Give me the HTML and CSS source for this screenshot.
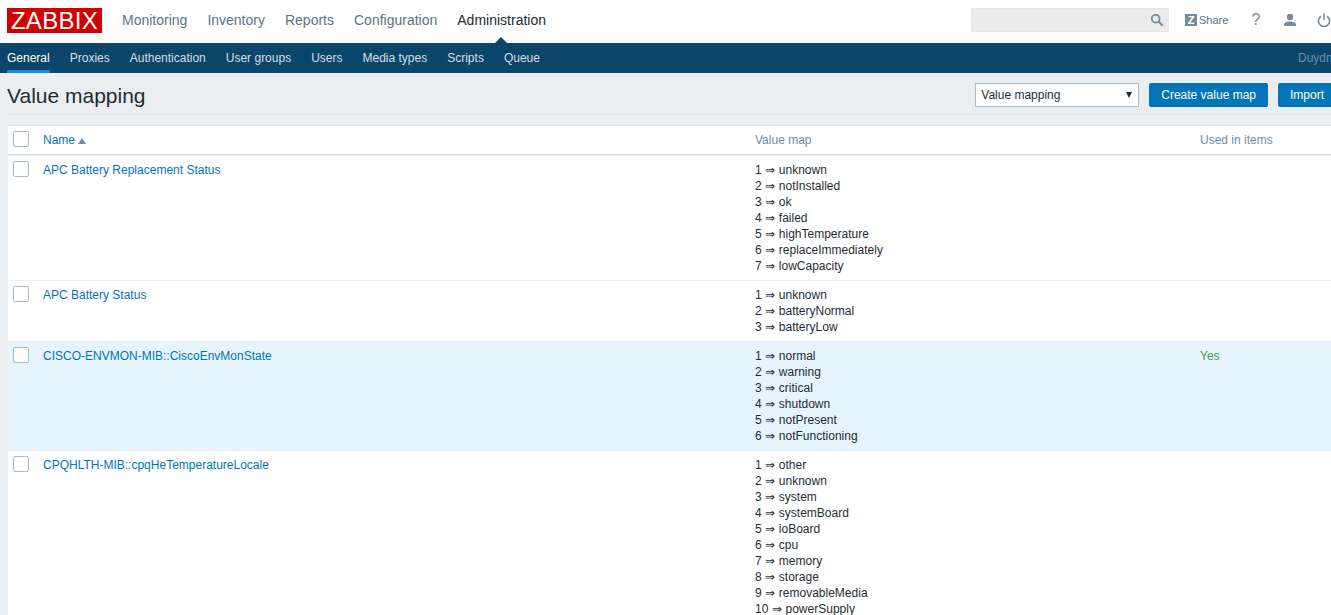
FILE: index.html
```html
<!DOCTYPE html>
<html lang="en">
<head>
  <meta charset="UTF-8">
  <meta name="viewport" content="width=device-width, initial-scale=1.0">
  <title>Configuration of value mapping</title>
  <link rel="stylesheet" href="styles.css">
</head>
<body>
  <div class="page">
    <!-- Top navigation -->
    <header class="topbar">
      <a class="logo">ZABBIX</a>
      <nav class="main-nav">
        <a>Monitoring</a>
        <a>Inventory</a>
        <a>Reports</a>
        <a>Configuration</a>
        <a class="selected">Administration</a>
      </nav>
      <div class="top-tools">
        <div class="search">
          <svg width="14" height="14" viewBox="0 0 16 16"><circle cx="6.5" cy="6.5" r="4.5" fill="none" stroke="#768d99" stroke-width="2"/><path d="M10 10l4.5 4.5" stroke="#768d99" stroke-width="2.4"/></svg>
        </div>
        <a class="share">
          <span class="share-z">Z</span>
          <span>Share</span>
        </a>
        <a class="tool tool-help">?</a>
        <a class="tool">
          <svg width="14" height="14" viewBox="0 0 14 14"><circle cx="7" cy="4" r="3.2" fill="#768d99"/><path d="M1 13v-1.5C1 9.5 4 8.5 7 8.5s6 1 6 3V13z" fill="#768d99"/></svg>
        </a>
        <a class="tool">
          <svg width="14" height="14" viewBox="0 0 14 14"><path d="M4 3.2a5.6 5.6 0 1 0 6 0" fill="none" stroke="#768d99" stroke-width="1.6"/><path d="M7 0.5v6.5" stroke="#768d99" stroke-width="1.6"/></svg>
        </a>
      </div>
    </header>

    <nav class="sub-nav">
      <a class="selected">General</a>
      <a>Proxies</a>
      <a>Authentication</a>
      <a>User groups</a>
      <a>Users</a>
      <a>Media types</a>
      <a>Scripts</a>
      <a>Queue</a>
      <span class="server-name">Duydm</span>
    </nav>

    <!-- Title and controls -->
    <div class="page-head">
      <h1>Value mapping</h1>
      <div class="controls">
        <div class="select">Value mapping<span class="select-arrow"></span></div>
        <button>Create value map</button>
        <button>Import</button>
      </div>
    </div>

    <table class="list">
      <colgroup>
        <col class="col-check">
        <col class="col-name">
        <col class="col-map">
        <col>
      </colgroup>
      <thead>
        <tr>
          <th><span class="checkbox"></span></th>
          <th><a>Name</a><span class="sort-up"></span></th>
          <th>Value map</th>
          <th>Used in items</th>
        </tr>
      </thead>
      <tbody>
        <tr>
          <td><span class="checkbox"></span></td>
          <td><a>APC Battery Replacement Status</a></td>
          <td class="map">
            <div>1 ⇒ unknown</div>
            <div>2 ⇒ notInstalled</div>
            <div>3 ⇒ ok</div>
            <div>4 ⇒ failed</div>
            <div>5 ⇒ highTemperature</div>
            <div>6 ⇒ replaceImmediately</div>
            <div>7 ⇒ lowCapacity</div>
          </td>
          <td></td>
        </tr>
        <tr>
          <td><span class="checkbox"></span></td>
          <td><a>APC Battery Status</a></td>
          <td class="map">
            <div>1 ⇒ unknown</div>
            <div>2 ⇒ batteryNormal</div>
            <div>3 ⇒ batteryLow</div>
          </td>
          <td></td>
        </tr>
        <tr class="hover">
          <td><span class="checkbox"></span></td>
          <td><a>CISCO-ENVMON-MIB::CiscoEnvMonState</a></td>
          <td class="map">
            <div>1 ⇒ normal</div>
            <div>2 ⇒ warning</div>
            <div>3 ⇒ critical</div>
            <div>4 ⇒ shutdown</div>
            <div>5 ⇒ notPresent</div>
            <div>6 ⇒ notFunctioning</div>
          </td>
          <td class="used">Yes</td>
        </tr>
        <tr>
          <td><span class="checkbox"></span></td>
          <td><a>CPQHLTH-MIB::cpqHeTemperatureLocale</a></td>
          <td class="map">
            <div>1 ⇒ other</div>
            <div>2 ⇒ unknown</div>
            <div>3 ⇒ system</div>
            <div>4 ⇒ systemBoard</div>
            <div>5 ⇒ ioBoard</div>
            <div>6 ⇒ cpu</div>
            <div>7 ⇒ memory</div>
            <div>8 ⇒ storage</div>
            <div>9 ⇒ removableMedia</div>
            <div>10 ⇒ powerSupply</div>
          </td>
          <td></td>
        </tr>
      </tbody>
    </table>
  </div>
</body>
</html>
```

FILE: styles.css
```css
html, body {
  margin: 0;
  padding: 0;
  height: 100%;
  overflow: hidden;
}
body {
  font-family: "Liberation Sans", Arial, sans-serif;
  font-size: 12px;
  line-height: 16px;
  color: #1f2c33;
  background: #ebeef0;
}
.page {
  width: 1346px;
}

/* top bar */
.topbar {
  display: flex;
  align-items: center;
  height: 43px;
  padding-left: 7px;
  background: #fff;
}
.logo {
  width: 95px;
  height: 25px;
  margin-top: -3px;
  background: #d40000;
  color: #fff;
  font-size: 24px;
  line-height: 26px;
  letter-spacing: 0.3px;
  text-align: center;
}
.main-nav {
  display: flex;
  gap: 20px;
  margin-left: 20px;
  margin-top: -3px;
  font-size: 14px;
  color: #5e7380;
}
.main-nav .selected {
  position: relative;
  color: #1f2c33;
}
.main-nav .selected::after {
  content: "";
  position: absolute;
  left: 37px;
  top: 25px;
  border: 7px solid transparent;
  border-top: 0;
  border-bottom-color: #0a466a;
}
.top-tools {
  display: flex;
  align-items: center;
  margin-left: auto;
  margin-top: -3px;
  padding-right: 5px;
}
.search {
  display: flex;
  align-items: center;
  justify-content: flex-end;
  box-sizing: border-box;
  width: 198px;
  height: 24px;
  padding-right: 4px;
  background: #ebebeb;
  border: 1px solid #e6e6e6;
}
.share {
  display: flex;
  align-items: center;
  gap: 2px;
  width: 54px;
  margin-left: 16px;
  font-size: 11px;
  color: #5e7380;
}
.share-z {
  width: 12px;
  height: 12px;
  background: #768d99;
  color: #fff;
  font-size: 11px;
  font-weight: bold;
  line-height: 12px;
  text-align: center;
}
.tool {
  display: flex;
  justify-content: center;
  width: 34px;
  color: #768d99;
}
.tool-help {
  font-size: 16px;
}

/* second level */
.sub-nav {
  display: flex;
  gap: 20px;
  height: 30px;
  padding-left: 7px;
  background: #0a466a;
  color: #d4dfe6;
  line-height: 31px;
}
.sub-nav .selected {
  color: #fff;
  box-shadow: inset 0 -3px 0 #1f8ad0;
}
.server-name {
  margin-left: auto;
  padding-right: 10px;
  color: #6f8fa3;
}

/* title row */
.page-head {
  display: flex;
  justify-content: space-between;
  align-items: center;
  box-sizing: border-box;
  height: 42px;
  margin-left: 7px;
  padding-right: 10px;
  border-bottom: 1px solid #dfe4e7;
}
h1 {
  margin: 4px 0 0;
  font-size: 21px;
  font-weight: normal;
  line-height: 44px;
}
.controls {
  display: flex;
  gap: 10px;
  margin-top: 3px;
}
.select {
  position: relative;
  box-sizing: border-box;
  width: 164px;
  height: 24px;
  padding-left: 5px;
  background: #fff;
  border: 1px solid #acbbc2;
  line-height: 22px;
}
.select-arrow {
  position: absolute;
  right: 6px;
  top: 8px;
  border: 3px solid transparent;
  border-bottom: 0;
  border-top: 6px solid #1f2c33;
}
button {
  height: 24px;
  padding: 0 12px;
  background: #0275b8;
  border: 0;
  border-radius: 2px;
  color: #fff;
  font-family: inherit;
  font-size: 12px;
}

/* table */
.list {
  table-layout: fixed;
  width: 1338px;
  margin: 10px 0 0 8px;
  background: #fff;
  border-collapse: collapse;
  border-top: 1px solid #dfe4e7;
}
.col-check {
  width: 30px;
}
.col-name {
  width: 712px;
}
.col-map {
  width: 445px;
}
th {
  height: 28px;
  padding: 0 5px;
  border-bottom: 2px solid #dfe4e7;
  color: #768d99;
  font-weight: normal;
  text-align: left;
}
td {
  padding: 6px 5px;
  border-bottom: 1px solid #ebeef0;
  vertical-align: top;
}
.map {
  word-spacing: 0.25px;
}
.list a {
  color: #0275b8;
}
.checkbox {
  display: block;
  box-sizing: border-box;
  width: 16px;
  height: 16px;
  margin-top: -1px;
  background: #fff;
  border: 1px solid #acbbc2;
  border-radius: 2px;
}
th .checkbox {
  margin-bottom: 1px;
}
.sort-up {
  display: inline-block;
  margin-left: 3px;
  border: 4px solid transparent;
  border-top: 0;
  border-bottom: 6px solid #768d99;
}
.hover td {
  background: #e6f4fe;
}
.used {
  color: #429e47;
}
```
